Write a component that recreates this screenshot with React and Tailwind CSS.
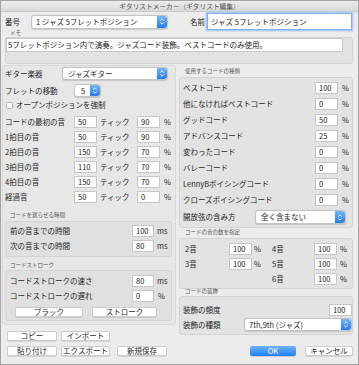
import React from 'react';

const Field = ({ value, w = 'w-[23px]', h = 'h-[12px]' }) => (
  <div className={`${w} ${h} shrink-0 bg-white border border-[#c6c6c6] pl-[3px] flex items-center text-[7.5px] text-[#222]`}>
    {value}
  </div>
);

const Arrows = () => (
  <div className="w-[10px] h-full shrink-0 rounded-r-[3px] bg-linear-to-b from-[#72b4fd] to-[#1b7cf0] flex items-center justify-center">
    <svg width="6" height="9" viewBox="0 0 6 9">
      <path d="M1.2 3.6 L3 1.8 L4.8 3.6 M1.2 5.4 L3 7.2 L4.8 5.4" stroke="white" strokeWidth="0.9" fill="none" />
    </svg>
  </div>
);

const Select = ({ value, w, h = 'h-[13px]', pl = 'pl-[5px]' }) => (
  <div className={`${w} ${h} shrink-0 flex bg-white rounded-[3px] border border-[#c3c3c3] shadow-[0_0.5px_1px_rgba(0,0,0,0.15)]`}>
    <div className={`flex-1 flex items-center ${pl} text-[7.5px] whitespace-nowrap overflow-hidden`}>{value}</div>
    <Arrows />
  </div>
);

const Btn = ({ children, w }) => (
  <div className={`${w} h-[10px] shrink-0 bg-white rounded-[2px] border border-[#cdcdcd] shadow-[0_0.5px_0.5px_rgba(0,0,0,0.2)] flex items-center justify-center text-[7.5px]`}>
    {children}
  </div>
);

const GroupLabel = ({ children, cls }) => (
  <div className={`h-[6px] flex items-center text-[5.5px] text-[#555] ${cls}`}>{children}</div>
);

const timing = [
  ['コードの最初の音', '50', '90'],
  ['1拍目の音', '50', '90'],
  ['2拍目の音', '150', '70'],
  ['3拍目の音', '110', '70'],
  ['4拍目の音', '150', '70'],
  ['経過音', '50', '0'],
];

const chordTypes = [
  ['ベストコード', '100'],
  ['他になければベストコード', '0'],
  ['グッドコード', '50'],
  ['アドバンスコード', '25'],
  ['変わったコード', '0'],
  ['バレーコード', '0'],
  ['LennyBボイシングコード', '0'],
  ['クローズボイシングコード', '0'],
];

export default function App() {
  return (
    <div className="w-[359px] h-[365px] bg-[#ececec] border border-[#a3a3a3] overflow-hidden font-['Noto_Sans_CJK_JP','Noto_Sans',sans-serif] text-[7.5px] leading-none text-[#1e1e1e] flex flex-col">
      {/* title bar */}
      <div className="h-[11px] shrink-0 bg-linear-to-b from-[#ececec] to-[#dadada] border-b border-[#c8c8c8] flex items-center justify-center text-[6.7px] text-[#555]">
        ギタリストメーカー（ギタリスト編集）
      </div>

      {/* header */}
      <div className="mt-[1px] h-[17px] flex items-center pl-[4px]">
        <div className="w-[26px]">番号</div>
        <Select value="1 ジャズ 5フレットポジション" w="w-[137px]" h="h-[14px]" pl="pl-[4px]" />
        <div className="ml-[22px] w-[17px]">名前</div>
        <div className="w-[145px] h-[17px] bg-white border border-[#7eaeef] shadow-[0_0_0_1.5px_#b2cdf4] pl-[3px] flex items-center">
          ジャズ 5フレットポジション
        </div>
      </div>

      <div className="h-[7px] flex items-center pl-[9px] text-[5.5px] text-[#555]">メモ</div>
      <div className="ml-[4px] w-[348px] h-[27px] bg-[#e2e2e2] border border-[#d3d3d3] rounded-[3px]">
        <div className="w-[337px] h-[14px] bg-white border border-[#c9c9c9] pl-[1px] flex items-center whitespace-nowrap">
          5フレットポジション内で演奏。ジャズコード装飾。ベストコードのみ使用。
        </div>
      </div>

      <div className="mt-[1px] ml-[1px] flex">
        {/* left column */}
        <div className="w-[174px] flex flex-col">
          <div className="h-[260px] border border-[#d8d8d8] rounded-[3px] bg-[#e7e7e7] pl-[2px] flex flex-col">
            <div className="mt-[1px] h-[13px] flex items-center">
              <div className="w-[57px]">ギター楽器</div>
              <Select value="ジャズギター" w="w-[106px]" />
            </div>
            <div className="mt-[4px] h-[13px] flex items-center">
              <div className="w-[69px]">フレットの移動</div>
              <Select value="5" w="w-[27px]" pl="pl-[6px]" />
            </div>
            <div className="mt-[3px] h-[10px] flex items-center">
              <div className="ml-[1px] w-[7px] h-[7px] bg-white border border-[#b0b0b0] rounded-[1.5px]" />
              <div className="ml-[3px]">オープンポジションを強制</div>
            </div>
            <div className="mt-[6px] flex flex-col gap-[3px]">
              {timing.map(([label, a, b]) => (
                <div key={label} className="h-[12px] flex items-center">
                  <div className="w-[69px]">{label}</div>
                  <Field value={a} />
                  <div className="ml-[3px] w-[37px]">ティック</div>
                  <Field value={b} />
                  <div className="ml-[4px]">%</div>
                </div>
              ))}
            </div>

            <GroupLabel cls="mt-[10px] pl-[5px]">コードを遅らせる時間</GroupLabel>
            <div className="mt-[2px] w-[167px] h-[36px] bg-[#e0e0e0] border border-[#d3d3d3] rounded-[3px] pl-[4px] pt-[3px] flex flex-col gap-[3px]">
              <div className="h-[12px] flex items-center">
                <div className="w-[122px]">前の音までの時間</div>
                <Field value="100" w="w-[22px]" />
                <div className="ml-[3px]">ms</div>
              </div>
              <div className="h-[12px] flex items-center">
                <div className="w-[122px]">次の音までの時間</div>
                <Field value="80" w="w-[22px]" />
                <div className="ml-[3px]">ms</div>
              </div>
            </div>

            <GroupLabel cls="mt-[6px] pl-[5px]">コードストローク</GroupLabel>
            <div className="mt-[1px] w-[167px] h-[51px] bg-[#e0e0e0] border border-[#d3d3d3] rounded-[3px] pl-[4px] pt-[4px] flex flex-col">
              <div className="h-[12px] flex items-center">
                <div className="w-[122px]">コードストロークの速さ</div>
                <Field value="80" w="w-[22px]" />
                <div className="ml-[3px]">ms</div>
              </div>
              <div className="mt-[3px] h-[12px] flex items-center">
                <div className="w-[122px]">コードストロークの遅れ</div>
                <Field value="0" w="w-[22px]" />
                <div className="ml-[4px]">%</div>
              </div>
              <div className="mt-[5px] ml-[5px] flex gap-[9px]">
                <Btn w="w-[68px]">ブラック</Btn>
                <Btn w="w-[65px]">ストローク</Btn>
              </div>
            </div>
          </div>

          <div className="mt-[6px] pl-[5px] flex gap-[4px]">
            <Btn w="w-[50px]">コピー</Btn>
            <Btn w="w-[49px]">インポート</Btn>
          </div>
          <div className="mt-[5px] pl-[5px] flex gap-[4px]">
            <Btn w="w-[50px]">貼り付け</Btn>
            <Btn w="w-[49px]">エクスポート</Btn>
            <div className="ml-[3px]">
              <Btn w="w-[50px]">新規保存</Btn>
            </div>
          </div>
        </div>

        {/* right column */}
        <div className="ml-[3px] w-[174px] flex flex-col">
          <GroupLabel cls="mt-[4px] pl-[6px]">使用するコードの種類</GroupLabel>
          <div className="mt-[2px] h-[151px] bg-[#e3e3e3] border border-[#d3d3d3] rounded-[3px] pl-[3px] pt-[4px] flex flex-col">
            <div className="flex flex-col gap-[4px]">
              {chordTypes.map(([label, v]) => (
                <div key={label} className="h-[12px] flex items-center">
                  <div className="flex-1">{label}</div>
                  <Field value={v} />
                  <div className="ml-[4px] w-[10px]">%</div>
                </div>
              ))}
            </div>
            <div className="mt-[4px] h-[14px] flex items-center">
              <div className="w-[72px]">開放弦の含み方</div>
              <Select value="全く含まない" w="w-[91px]" h="h-[14px]" />
            </div>
          </div>

          <GroupLabel cls="mt-[2px] pl-[6px]">コードの音の数を指定</GroupLabel>
          <div className="mt-[2px] h-[51px] bg-[#e3e3e3] border border-[#d3d3d3] rounded-[3px] pl-[5px] pt-[4px] flex flex-col gap-[3px]">
            <div className="h-[12px] flex items-center">
              <div className="w-[44px]">2音</div>
              <Field value="100" />
              <div className="ml-[2px] w-[18px]">%</div>
              <div className="w-[42px]">4音</div>
              <Field value="100" />
              <div className="ml-[3px]">%</div>
            </div>
            <div className="h-[12px] flex items-center">
              <div className="w-[44px]">3音</div>
              <Field value="100" />
              <div className="ml-[2px] w-[18px]">%</div>
              <div className="w-[42px]">5音</div>
              <Field value="100" />
              <div className="ml-[3px]">%</div>
            </div>
            <div className="h-[12px] flex items-center">
              <div className="w-[87px]" />
              <div className="w-[42px]">6音</div>
              <Field value="100" />
              <div className="ml-[3px]">%</div>
            </div>
          </div>

          <GroupLabel cls="pl-[6px]">コードの装飾</GroupLabel>
          <div className="mt-[1px] h-[39px] bg-[#e3e3e3] border border-[#d3d3d3] rounded-[3px] pl-[3px] pt-[7px] flex flex-col">
            <div className="h-[12px] flex items-center">
              <div className="w-[146px]">装飾の頻度</div>
              <Field value="100" />
            </div>
            <div className="mt-[2px] h-[13px] flex items-center">
              <div className="w-[61px]">装飾の種類</div>
              <Select value="7th,9th (ジャズ)" w="w-[108px]" pl="pl-[4px]" />
            </div>
          </div>

          <div className="mt-[11px] ml-[71px] flex gap-[9px]">
            <div className="w-[48px] h-[10px] rounded-[2px] bg-linear-to-b from-[#6db3fb] to-[#1a7ff4] shadow-[0_0.5px_0.5px_rgba(0,0,0,0.25)] flex items-center justify-center text-white text-[7.5px]">
              OK
            </div>
            <Btn w="w-[48px]">キャンセル</Btn>
          </div>
        </div>
      </div>
    </div>
  );
}
